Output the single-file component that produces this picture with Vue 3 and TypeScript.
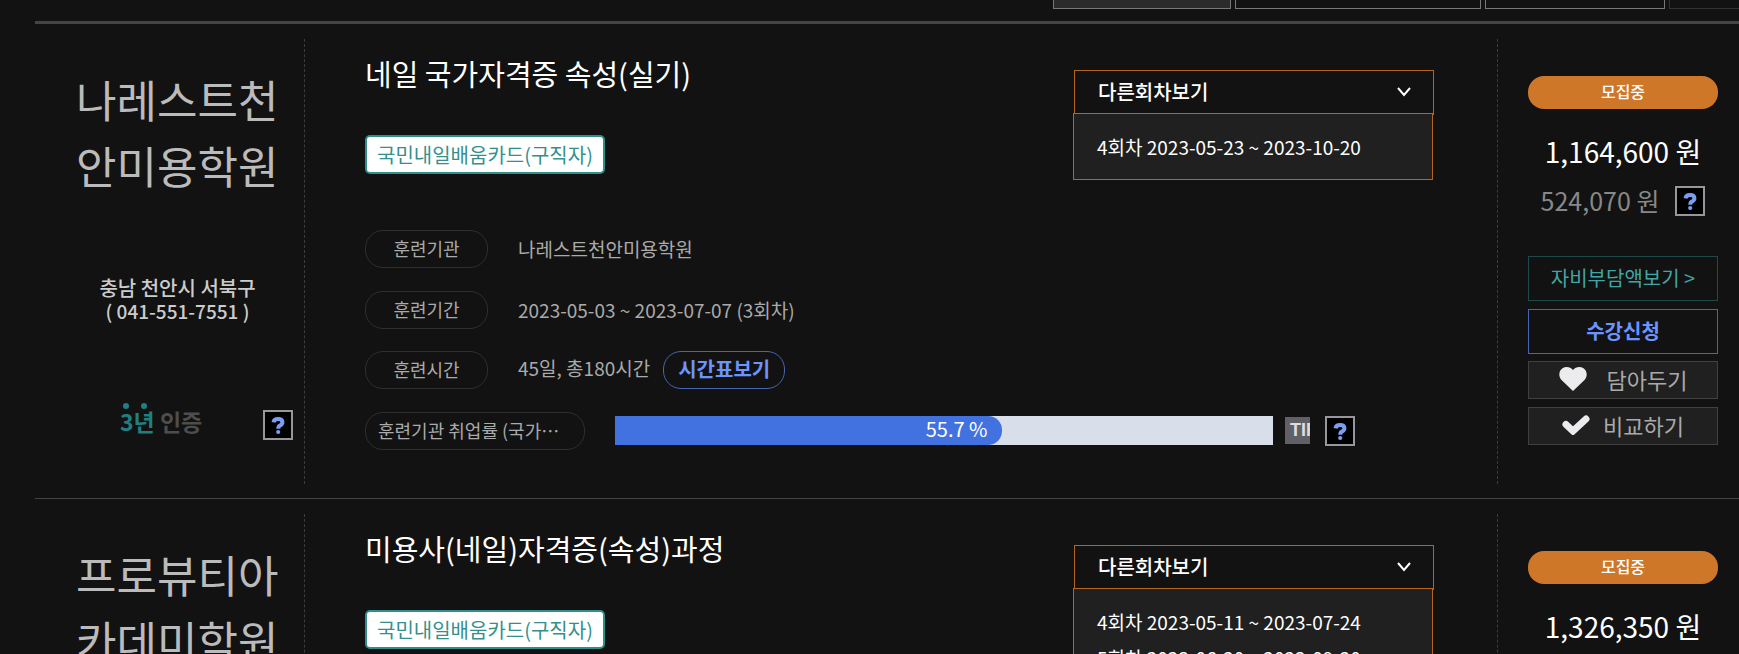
<script setup lang="ts">
interface Detail {
  label: string
  value: string
  schedule?: boolean
}
interface Course {
  org: string[]
  region?: string
  phone?: string
  title: string
  sessions: string[]
  details: Detail[]
  rateLabel?: string
  rate?: number
  price: string
  selfPay?: string
}

const courses: Course[] = [
  {
    org: ['나레스트천', '안미용학원'],
    region: '충남 천안시 서북구',
    phone: '( 041-551-7551 )',
    title: '네일 국가자격증 속성(실기)',
    sessions: ['4회차 2023-05-23 ~ 2023-10-20'],
    details: [
      { label: '훈련기관', value: '나레스트천안미용학원' },
      { label: '훈련기간', value: '2023-05-03 ~ 2023-07-07 (3회차)' },
      { label: '훈련시간', value: '45일, 총180시간', schedule: true },
    ],
    rateLabel: '훈련기관 취업률 (국가⋯',
    rate: 55.7,
    price: '1,164,600 원',
    selfPay: '524,070 원',
  },
  {
    org: ['프로뷰티아', '카데미학원'],
    title: '미용사(네일)자격증(속성)과정',
    sessions: ['4회차 2023-05-11 ~ 2023-07-24', '5회차 2023-06-20 ~ 2023-09-20'],
    details: [],
    price: '1,326,350 원',
  },
]
</script>

<template>
  <main class="page">
    <div class="tabs">
      <span class="tab on"></span><span class="tab wide"></span><span class="tab"></span><span class="tab dim"></span>
    </div>
    <ul class="list">
      <li v-for="c in courses" :key="c.title" class="item">
        <section class="org">
          <h2 class="org-name"><span v-for="l in c.org" :key="l">{{ l }}</span></h2>
          <address v-if="c.region" class="addr">
            <span>{{ c.region }}</span>
            <span class="phone">{{ c.phone }}</span>
          </address>
          <div v-if="c.region" class="cert">
            <span class="cert-mark"><b class="years">3년</b> <b>인증</b></span>
            <button class="help" type="button" aria-label="인증 도움말">
              <svg viewBox="0 0 26 26" aria-hidden="true"><path class="q" d="M8.500 10.400Q9 7 13 7q4.400 0 4.400 3.300 0 2.300-2.500 3.300-1.600.7-1.600 3.200" /><circle cx="13.200" cy="20" r="2.100" /></svg>
            </button>
          </div>
        </section>

        <section class="body">
          <div class="head">
            <div>
              <h3 class="title">{{ c.title }}</h3>
              <span class="badge">국민내일배움카드(구직자)</span>
            </div>
            <div class="sessions">
              <button class="toggle" type="button" aria-expanded="true">
                다른회차보기
                <svg class="chev" viewBox="0 0 14 10" aria-hidden="true"><path d="M1 1l6 7 6-7" /></svg>
              </button>
              <ul class="menu">
                <li v-for="s in c.sessions" :key="s">{{ s }}</li>
              </ul>
            </div>
          </div>
          <dl v-if="c.details.length" class="details">
            <div v-for="d in c.details" :key="d.label" class="row">
              <dt class="tag">{{ d.label }}</dt>
              <dd class="value"><span class="text">{{ d.value }}</span><button v-if="d.schedule" class="schedule" type="button">시간표보기</button></dd>
            </div>
            <div v-if="c.rate" class="row">
              <dt class="tag long">{{ c.rateLabel }}</dt>
              <dd class="rate">
                <div class="bar"><div class="fill" :style="{ width: `calc(${c.rate}% + 20px)` }">{{ c.rate }} %</div></div>
                <span class="tip">TIP</span>
                <button class="help" type="button" aria-label="취업률 도움말">
                  <svg viewBox="0 0 26 26" aria-hidden="true"><path class="q" d="M8.500 10.400Q9 7 13 7q4.400 0 4.400 3.300 0 2.300-2.500 3.300-1.600.7-1.600 3.200" /><circle cx="13.200" cy="20" r="2.100" /></svg>
                </button>
              </dd>
            </div>
          </dl>
        </section>

        <section class="side">
          <span class="state">모집중</span>
          <strong class="price">{{ c.price }}</strong>
          <template v-if="c.selfPay">
            <div class="self">
              <span>{{ c.selfPay }}</span>
              <button class="help" type="button" aria-label="수강료 도움말">
                <svg viewBox="0 0 26 26" aria-hidden="true"><path class="q" d="M8.500 10.400Q9 7 13 7q4.400 0 4.400 3.300 0 2.300-2.500 3.300-1.600.7-1.600 3.200" /><circle cx="13.200" cy="20" r="2.100" /></svg>
              </button>
            </div>
            <button class="act teal" type="button">자비부담액보기 &gt;</button>
            <button class="act blue" type="button">수강신청</button>
            <button class="act small" type="button">
              <svg class="heart" viewBox="0 0 28 24" aria-hidden="true"><path d="M14 24L2.500 13C-1 9 0 3.500 3.500 1.300 7-.8 11.500 0 14 3c2.500-3 7-3.800 10.500-1.700C28 3.500 29 9 25.500 13z" /></svg>
              담아두기
            </button>
            <button class="act small check" type="button">
              <svg class="tick" viewBox="0 0 28 20" aria-hidden="true"><path d="M4 9.500l7 6.500L24 4" /></svg>
              비교하기
            </button>
          </template>
        </section>
      </li>
    </ul>
  </main>
</template>

<style>
body {
  background: #121212;
}
</style>

<style scoped>
.page {
  height: 100vh;
  overflow: hidden;
  box-sizing: border-box;
  padding-left: 35px;
  background: #121212;
  color: #fff;
  font-family: "Noto Sans CJK KR", "Noto Sans", sans-serif;
}
.page *,
.page *::before {
  box-sizing: border-box;
}
ul,
dl,
dd,
h2,
h3 {
  margin: 0;
  padding: 0;
  list-style: none;
  font-weight: 400;
}
button {
  margin: 0;
  padding: 0;
  background: none;
  color: inherit;
  font: inherit;
  cursor: pointer;
}
.tabs {
  display: flex;
  justify-content: flex-end;
  gap: 4px;
  height: 9px;
}
.tab {
  width: 180px;
  border: 1px solid #777;
  border-top: 0;
}
.tab.on {
  width: 178px;
  background: #2b2b2b;
}
.tab.wide {
  width: 246px;
}
.tab.dim {
  width: 70px;
  border-color: #333;
  border-right: 0;
}
.list {
  margin-top: 12px;
  border-top: 3px solid #444;
}
.item {
  display: flex;
  height: 475px;
  padding: 15px 0 14px;
  border-bottom: 1px solid #444;
}
.org {
  display: flex;
  flex-direction: column;
  flex: none;
  width: 270px;
  padding: 27px 11px 0 20px;
  border-right: 1px dashed #3c3c3c;
  text-align: center;
}
.org-name {
  height: 132px;
  margin-left: 21px;
  color: #bbb;
  font-size: 44px;
  line-height: 66px;
  text-align: left;
}
.org-name span {
  display: block;
}
.addr {
  margin: 78px 0 0 7px;
  color: #ccc;
  font-size: 20px;
  font-style: normal;
  font-weight: 500;
  line-height: 24px;
}
.addr span {
  display: block;
}
.addr .phone {
  font-size: 19px;
  line-height: 22px;
}
.cert {
  display: flex;
  justify-content: space-between;
  align-items: flex-end;
  margin-top: 80px;
  padding-left: 65px;
}
.cert-mark {
  color: #4d4d4d;
  font-size: 23px;
  line-height: 38px;
}
.years {
  position: relative;
  color: #208080;
}
.years::before {
  content: "";
  position: absolute;
  top: -1px;
  left: 3px;
  width: 6px;
  height: 6px;
  border-radius: 50%;
  background: #208080;
  box-shadow: 18px 0 #208080;
}
.help {
  flex: none;
  width: 30px;
  height: 30px;
  border: 2px solid #96969c;
  background: #000;
}
.help svg {
  display: block;
  fill: #7b9ef0;
}
.q {
  fill: none;
  stroke: #7b9ef0;
  stroke-width: 4;
}
.body {
  flex: 1;
  min-width: 0;
  padding: 12px 63px 0 60px;
}
.head {
  display: flex;
  justify-content: space-between;
  height: 179px;
}
.title {
  font-size: 29px;
  line-height: 44px;
}
.badge {
  display: inline-block;
  height: 39px;
  margin-top: 40px;
  padding: 0 10px;
  border: 2px solid #2f8f8c;
  border-radius: 5px;
  background: #fff;
  color: #35908d;
  font-size: 20px;
  line-height: 36px;
}
.sessions {
  width: 360px;
  padding-top: 19px;
  font-weight: 500;
}
.toggle {
  display: flex;
  justify-content: space-between;
  align-items: center;
  width: 100%;
  height: 45px;
  padding: 0 22px 2px 23px;
  border: 1px solid #b5651d;
  font-size: 20px;
}
.chev {
  width: 14px;
  height: 10px;
  fill: none;
  stroke: #fff;
  stroke-width: 2;
}
.menu {
  position: relative;
  margin: -2px 1px 0 -1px;
  padding: 15px 23px 14px;
  border: 1px solid #b5651d;
  background: #202020;
  font-size: 19px;
  line-height: 36px;
}
.details {
  display: flex;
  flex-direction: column;
  justify-content: space-between;
  height: 220px;
  color: #aaa;
}
.row {
  display: flex;
  align-items: center;
  gap: 30px;
  height: 38px;
  font-size: 19px;
}
.tag {
  flex: none;
  width: 123px;
  height: 38px;
  border: 1px solid #2f2f2f;
  border-radius: 18px;
  font-size: 18px;
  line-height: 35px;
  text-align: center;
}
.tag.long {
  width: 220px;
  padding-left: 12px;
  text-align: left;
}
.value {
  display: flex;
}
.value .text {
  line-height: 34px;
}
.schedule {
  width: 122px;
  height: 38px;
  margin-left: 13px;
  padding-bottom: 2px;
  border: 1px solid #4864b4;
  border-radius: 18px;
  color: #6c94ff;
  font-size: 20px;
  font-weight: 700;
  line-height: 34px;
}
.rate {
  display: flex;
  flex: 1;
  align-items: center;
  padding-right: 79px;
}
.bar {
  flex: 1;
  height: 29px;
  background: #d8deea;
}
.fill {
  height: 29px;
  padding-right: 14px;
  border-radius: 0 14px 14px 0;
  background: #4272e0;
  color: #fff;
  font-size: 20px;
  line-height: 26px;
  text-align: right;
}
.tip {
  width: 25px;
  height: 27px;
  margin: 0 15px 0 12px;
  padding-left: 5px;
  overflow: hidden;
  background: #626067;
  color: #ddd;
  font-family: "Liberation Sans", sans-serif;
  font-size: 18px;
  font-weight: 700;
  line-height: 27px;
}
.side {
  display: flex;
  flex: none;
  flex-direction: column;
  width: 242px;
  padding: 37px 21px 0 30px;
  border-left: 1px dashed #3c3c3c;
}
.state {
  height: 33px;
  border-radius: 16px;
  background: #cf7728;
  font-size: 16px;
  font-weight: 500;
  line-height: 31px;
  text-align: center;
}
.price {
  margin-top: 21px;
  font-size: 28px;
  font-weight: 400;
  line-height: 42px;
  text-align: center;
}
.self {
  display: flex;
  align-items: center;
  justify-content: center;
  gap: 16px;
  height: 58px;
  color: #888;
  font-size: 25px;
}
.self span {
  padding-bottom: 2px;
}
.act {
  display: flex;
  align-items: center;
  justify-content: center;
  height: 45px;
  margin-bottom: 8px;
  padding-bottom: 2px;
  border: 1px solid #4864b4;
  font-size: 20px;
}
.teal {
  margin-top: 26px;
  border-color: #1f4a4b;
  color: #42a5a5;
}
.blue {
  margin-bottom: 7px;
  color: #6c94ff;
  font-weight: 700;
}
.small {
  gap: 20px;
  height: 38px;
  border-color: #404040;
  background: #202020;
  color: #aaa;
  font-size: 22px;
}
.check {
  gap: 13px;
}
.heart {
  width: 28px;
  height: 24px;
  fill: #ececee;
}
.tick {
  width: 28px;
  height: 20px;
  fill: none;
  stroke: #ececee;
  stroke-width: 7;
  stroke-linecap: round;
}
</style>
